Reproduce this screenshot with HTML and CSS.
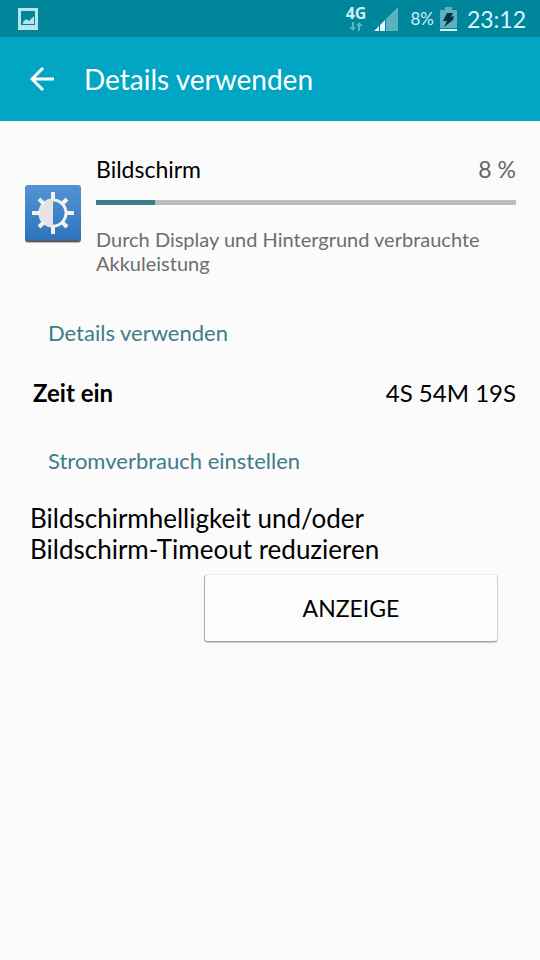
FILE: index.html
```html
<!DOCTYPE html>
<html lang="de">
<head>
<meta charset="utf-8">
<meta name="viewport" content="width=device-width, initial-scale=1">
<title>Details verwenden</title>
<link rel="stylesheet" href="styles.css">
</head>
<body>
<div class="status">
  <svg class="status-picture" viewBox="0 0 20 22" width="20" height="22" aria-hidden="true">
    <path fill="#b8e4ec" fill-rule="evenodd" d="M0 0h20v22H0zM3 3v14h14V3z"/>
    <path fill="#b8e4ec" d="M5 16v-2l3-3 3 2 5-5v8z"/>
  </svg>
  <div class="network">
    <span>4G</span>
    <svg viewBox="0 0 14 9" width="14" height="9" aria-hidden="true">
      <path fill="#5db4c3" d="M3 0h2v5h2L4 9 0 5h3zM9 9h2V4h3l-4-4-3 4h2z"/>
    </svg>
  </div>
  <svg class="signal" viewBox="0 0 24 24" width="24" height="24" aria-hidden="true">
    <path fill="#5db0bf" d="M24 0v24H12V12z"/>
    <path fill="#e0f8fb" d="M0 24 5 19v5zM6 18l5-5v11H6z"/>
  </svg>
  <span class="percent">8%</span>
  <svg class="battery" viewBox="0 0 17 24" width="17" height="24" aria-hidden="true">
    <path fill="#5db0bf" d="M5 0h7v3h5v18H0V3h5z"/>
    <path fill="#d8f5f9" d="M0 22h17v2H0z"/>
    <path fill="#00363f" d="M7 6h6l-2 4 3-1-1 4-9 7 3-6H3z"/>
  </svg>
  <time class="clock">23:12</time>
</div>
<header class="bar">
  <button class="back" type="button" aria-label="Zurück">
    <svg viewBox="0 0 24 24" width="24" height="24" fill="none" stroke="#fff" stroke-width="3" aria-hidden="true">
      <path d="M13 1 2 12l11 11M2 12h22"/>
    </svg>
  </button>
  <h1>Details verwenden</h1>
</header>
<main>
  <section class="usage">
    <svg class="app-icon" viewBox="0 0 58 60" width="58" height="60" aria-hidden="true">
      <defs>
        <linearGradient id="blue" x2="0" y2="1"><stop stop-color="#5294d5"/><stop offset="1" stop-color="#2e73bc"/></linearGradient>
      </defs>
      <rect x="1" y="3" width="56" height="56" rx="3" fill="#b5b9be"/>
      <rect x="1" y="2" width="56" height="56" rx="3" fill="#555d69"/>
      <rect x="1" y="1" width="56" height="55" rx="3" fill="url(#blue)"/>
      <g transform="translate(29 29)">
        <circle r="13" fill="none" stroke="#f0f0f0" stroke-width="3"/>
        <path fill="#e5e5e7" d="M0-14.500a14.500 14.500 0 0 0 0 29z"/>
        <path stroke="#f2f2f2" stroke-width="4" d="M0-13v-8M0 13v8M-13 0h-8M13 0h8M-9-9l-5-5M9-9l5-5M-9 9l-5 5M9 9l5 5"/>
      </g>
    </svg>
    <div class="usage-body">
      <div class="usage-head">
        <label for="share">Bildschirm</label>
        <span class="share">8 %</span>
      </div>
      <progress id="share" value="14" max="100"></progress>
      <p>Durch Display und Hintergrund verbrauchte Akkuleistung</p>
    </div>
  </section>
  <h2>Details verwenden</h2>
  <dl class="row">
    <dt>Zeit ein</dt>
    <dd>4S 54M 19S</dd>
  </dl>
  <h2>Stromverbrauch einstellen</h2>
  <p class="advice">Bildschirmhelligkeit und/oder Bildschirm-Timeout reduzieren</p>
  <div class="actions"><button class="action" type="button">ANZEIGE</button></div>
</main>
</body>
</html>
```
FILE: styles.css
```css
* { box-sizing: border-box; }
body {
  margin: 0;
  min-height: 100vh;
  background: #fbfbfb;
  color: #000;
  font-family: Lato, "Open Sans", sans-serif;
}
h1, h2, p, dl, dd { margin: 0; font-weight: 400; }
button { font: inherit; color: inherit; }
svg { display: block; flex: none; }

.status {
  display: flex;
  align-items: center;
  height: 37px;
  padding: 0 14px 0 18px;
  background: #00869b;
  color: #c9f1f6;
}
.network {
  display: flex;
  flex-direction: column;
  align-items: center;
  gap: 2px;
  margin-left: auto;
  font: 700 16px/14px "Open Sans", sans-serif;
}
.signal { margin-left: 8px; }
.percent { margin-left: 12px; font-size: 17px; }
.battery { margin-left: 6px; }
.clock { margin-left: 10px; font-size: 23px; color: #d8f7fa; }

.bar {
  display: flex;
  align-items: center;
  height: 84px;
  padding: 0 24px;
  background: #00a6c3;
  color: #fff;
}
.back {
  display: flex;
  padding: 6px;
  border: 0;
  background: none;
}
h1 { margin-left: 24px; font-size: 28px; line-height: 36px; }

main { padding: 32px 24px; }
.usage { display: flex; align-items: center; gap: 14px; }
.usage-body { flex: 1; }
.usage-head {
  display: flex;
  justify-content: space-between;
  line-height: 32px;
  font-size: 23px;
}
.share { color: #666; }
progress {
  display: block;
  width: 100%;
  height: 5px;
  margin: 15px 0 22px;
  border: 0;
  background: #bdbdbd;
  appearance: none;
}
progress::-webkit-progress-bar { background: #bdbdbd; }
progress::-webkit-progress-value { background: #3c7d86; }
progress::-moz-progress-bar { background: #3c7d86; }
.usage p { font-size: 20px; line-height: 24px; color: #6d6d6d; }

h2 {
  margin: 44px 24px 0;
  font-size: 22px;
  line-height: 28px;
  color: #3c7d86;
}
.row {
  display: flex;
  justify-content: space-between;
  margin-top: 28px;
  padding-left: 9px;
  font-size: 24px;
  line-height: 36px;
}
.row dt { font-weight: 700; }
.row + h2 { margin-top: 36px; }
.advice {
  max-width: 400px;
  margin-top: 28px;
  padding-left: 6px;
  font-size: 26px;
  line-height: 31px;
}
.actions {
  display: flex;
  justify-content: flex-end;
  margin-top: 9px;
  padding-right: 18px;
}
.action {
  width: 294px;
  height: 68px;
  border: 1px solid #d4d4d4;
  border-top-color: #ededed;
  border-bottom-color: #a2a2a2;
  border-left-color: #b0b0b0;
  border-radius: 4px;
  background: #fcfcfc;
  box-shadow: 0 1px 1px #ccc;
  font-size: 23px;
}
```
